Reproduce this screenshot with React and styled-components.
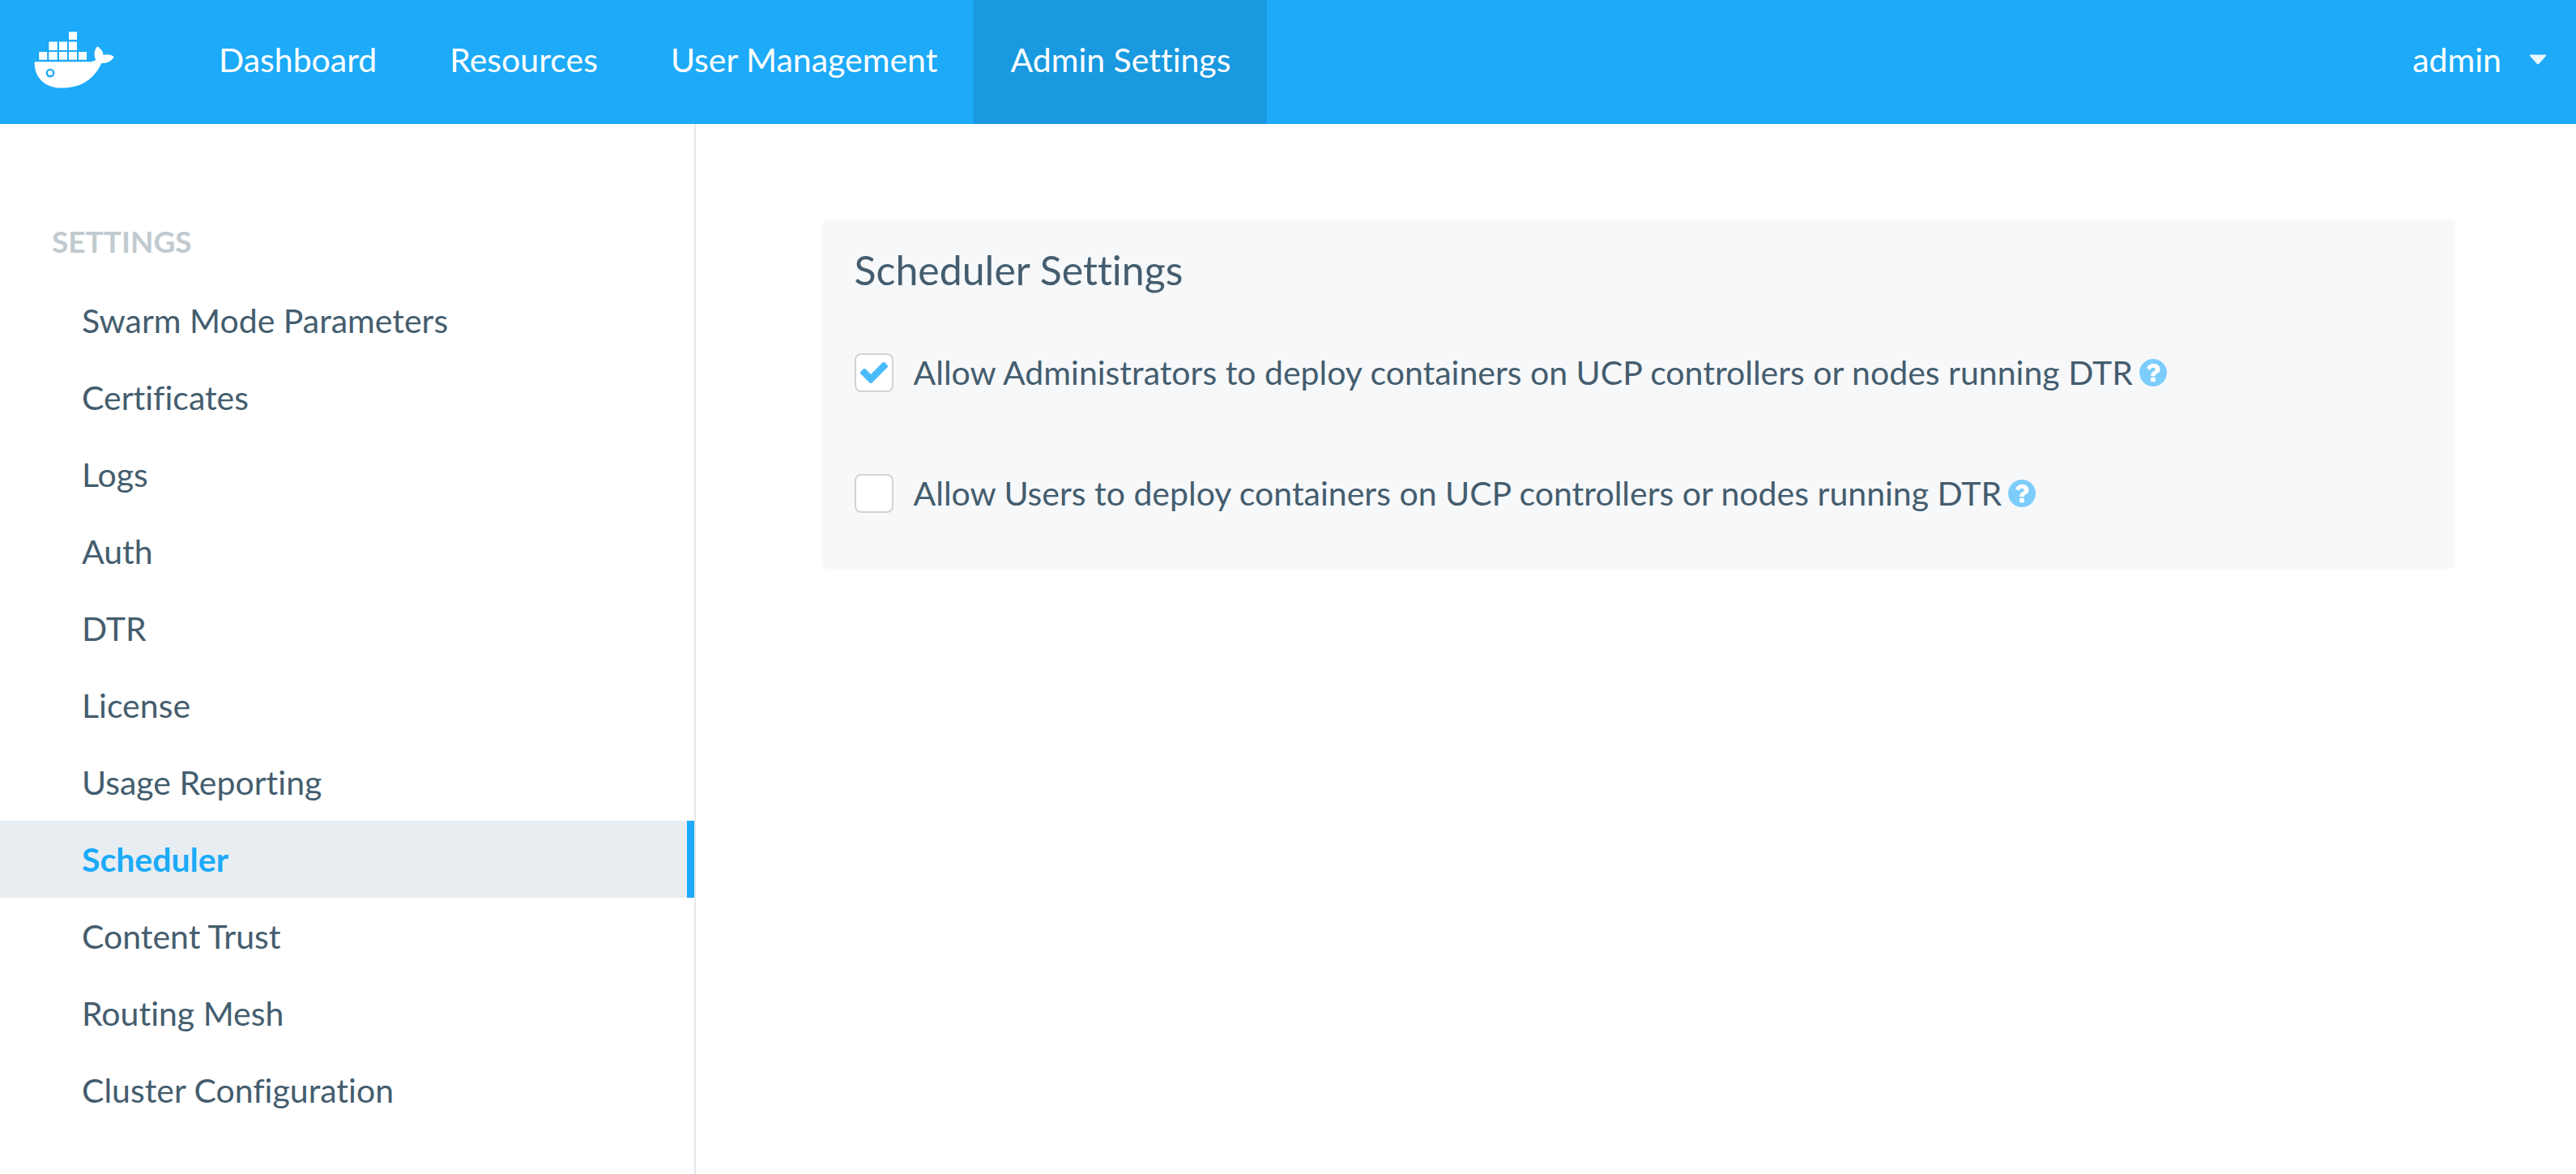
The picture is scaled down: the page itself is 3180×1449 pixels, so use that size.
import React from "react";
import styled, { createGlobalStyle } from "styled-components";

const GlobalStyle = createGlobalStyle`
  *, *::before, *::after { box-sizing: border-box; }
  body {
    margin: 0;
    background: #fff;
    color: #445d6e;
    font: 400 41px/50px Lato, "Open Sans", sans-serif;
    font-variant-ligatures: none;
  }
`;

const Page = styled.div`
  min-height: 100vh;
  display: flex;
  flex-direction: column;
`;

const Header = styled.header`
  display: flex;
  align-items: stretch;
  min-height: 153px;
  background: #1caaf9;
`;

const Brand = styled.a`
  display: flex;
  align-items: center;
  padding: 0 84px 5px 42px;
`;

const Nav = styled.nav`
  display: flex;
`;

const NavLink = styled.a`
  display: flex;
  align-items: center;
  padding: 0 45px 6px;
  color: #fff;
  text-decoration: none;
  background: ${({ $active }) => ($active ? "#1899e0" : "transparent")};
`;

const AccountButton = styled.button`
  display: flex;
  align-items: center;
  gap: 34px;
  margin-left: auto;
  padding: 0 36px 6px;
  border: 0;
  background: none;
  color: #fff;
  font: inherit;
  cursor: pointer;
`;

const Body = styled.div`
  flex: 1;
  display: flex;
`;

const Sidebar = styled.aside`
  flex: 0 0 27%;
  padding-top: 120px;
  border-right: 2px solid #e5e6e8;
`;

const SidebarTitle = styled.h2`
  margin: 0 0 25px;
  padding-left: 64px;
  color: #c0cacf;
  font-size: 37px;
  font-weight: 700;
  line-height: 50px;
`;

const Menu = styled.ul`
  margin: 0;
  padding: 0;
  list-style: none;
`;

const MenuLink = styled.a`
  display: block;
  padding-left: 101px;
  border-right: 9px solid ${({ $active }) => ($active ? "#1caaf9" : "transparent")};
  background: ${({ $active }) => ($active ? "#e8edf1" : "transparent")};
  color: ${({ $active }) => ($active ? "#1caaf9" : "inherit")};
  font-weight: ${({ $active }) => ($active ? 700 : 400)};
  line-height: 95px;
  text-decoration: none;
`;

const Main = styled.main`
  flex: 1;
  min-width: 0;
  padding: 118px 149px 118px 156px;
`;

const Card = styled.section`
  padding: 32px 40px 69px;
  border-radius: 6px;
  background: #f7f8fa;
`;

const CardTitle = styled.h1`
  margin: 0 0 73px;
  font-size: 50px;
  font-weight: 400;
  line-height: 60px;
`;

const Options = styled.div`
  display: flex;
  flex-direction: column;
  gap: 101px;
`;

const Option = styled.div`
  display: flex;
  align-items: center;
  min-height: 48px;
`;

const CheckCell = styled.span`
  display: grid;
  place-items: center;
  margin-right: 25px;

  > * { grid-area: 1 / 1; }
  > svg { pointer-events: none; visibility: hidden; }
  > input:checked + svg { visibility: visible; }
`;

const Checkbox = styled.input`
  appearance: none;
  width: 48px;
  height: 48px;
  margin: 0;
  border: 2px solid #d3d3d3;
  border-radius: 8px;
  background: #fff;
`;

const OptionLabel = styled.label`
  line-height: 48px;
`;

const HelpButton = styled.button`
  display: flex;
  margin-left: 8px;
  padding: 0;
  border: 0;
  background: none;
  color: #7ccdfb;
  cursor: pointer;
`;

function Whale() {
  return (
    <svg width="99" height="70" viewBox="42 39 99 70" fill="#fff" aria-hidden="true">
      <path d="M85 39.300h10v9.700h-10zM60.300 51.500h10.400V62H60.300zM73 51.500h10V62H73zM85 51.500h10V62H85zM48.200 64h10v9.700h-10zM60.300 64h10.400v9.700H60.300zM73 64h10v9.700H73zM85 64h10v9.700H85zM97 64h10v9.700H97z" />
      <path
        fillRule="evenodd"
        d="M43 76.300H110C113 76.300 116 75.300 118.300 73.900C115.500 68 116 61.500 120.200 57.200C124.500 60 127.500 63.500 127.500 68C132 66.700 137 67 140.700 70C138 75.500 132 78.500 125.300 78C117 96 102 108.600 76 108.600C54 108.600 41.700 94 42.700 76.300ZM62 84.700a5.400 5.400 0 1 0 0 10.800a5.400 5.400 0 1 0 0-10.800Z"
      />
      <circle cx="62" cy="90.100" r="3" />
    </svg>
  );
}

function Caret() {
  return (
    <svg width="22" height="13" viewBox="0 0 22 13" fill="#e8f6fe" aria-hidden="true">
      <path d="M1.500 0.500h19q1.200 0.300 0.500 1.500l-9 10q-1 0.800-2 0l-9-10q-0.700-1.200 0.500-1.500z" />
    </svg>
  );
}

function CheckMark() {
  return (
    <svg width="34" height="26" viewBox="121 334 1550 1188" fill="#49bafb" aria-hidden="true">
      <path d="M1671 566q0 40-28 68l-724 724-136 136q-28 28-68 28t-68-28l-136-136-362-362q-28-28-28-68t28-68l136-136q28-28 68-28t68 28l294 295 656-657q28-28 68-28t68 28l136 136q28 28 28 68z" />
    </svg>
  );
}

function QuestionCircle() {
  return (
    <svg width="34" height="34" viewBox="128 128 1536 1536" fill="currentColor" aria-hidden="true">
      <circle cx="896" cy="896" r="700" fill="#fff" />
      <path d="M1024 1376v-192q0-14-9-23t-23-9h-192q-14 0-23 9t-9 23v192q0 14 9 23t23 9h192q14 0 23-9t9-23zm256-672q0-88-55.500-163t-138.500-116-170-41q-243 0-371 213-15 24 8 42l132 100q7 6 19 6 16 0 25-12 53-68 86-92 34-24 86-24 48 0 85.500 26t37.500 59q0 38-20 61t-68 45q-63 28-115.500 86.500t-52.500 125.500v36q0 14 9 23t23 9h192q14 0 23-9t9-23q0-19 21.500-49.500t54.500-49.500q32-18 49-28.500t46-35 44.500-48 28-60.500 12.500-81zm384 192q0 209-103 385.500t-279.500 279.500-385.500 103-385.500-103-279.500-279.500-103-385.500 103-385.500 279.500-279.500 385.500-103 385.500 103 279.500 279.500 103 385.500z" />
    </svg>
  );
}

const navItems = ["Dashboard", "Resources", "User Management", "Admin Settings"];

const menuItems = [
  "Swarm Mode Parameters",
  "Certificates",
  "Logs",
  "Auth",
  "DTR",
  "License",
  "Usage Reporting",
  "Scheduler",
  "Content Trust",
  "Routing Mesh",
  "Cluster Configuration",
];

const options = [
  {
    id: "allow-admins",
    label: "Allow Administrators to deploy containers on UCP controllers or nodes running DTR",
    checked: true,
  },
  {
    id: "allow-users",
    label: "Allow Users to deploy containers on UCP controllers or nodes running DTR",
    checked: false,
  },
];

export default function App() {
  return (
    <Page>
      <GlobalStyle />
      <Header>
        <Brand href="#" aria-label="Docker">
          <Whale />
        </Brand>
        <Nav>
          {navItems.map((item) => (
            <NavLink key={item} href="#" $active={item === "Admin Settings"}>
              {item}
            </NavLink>
          ))}
        </Nav>
        <AccountButton type="button">
          admin
          <Caret />
        </AccountButton>
      </Header>
      <Body>
        <Sidebar>
          <SidebarTitle>SETTINGS</SidebarTitle>
          <Menu>
            {menuItems.map((item) => (
              <li key={item}>
                <MenuLink href="#" $active={item === "Scheduler"}>
                  {item}
                </MenuLink>
              </li>
            ))}
          </Menu>
        </Sidebar>
        <Main>
          <Card>
            <CardTitle>Scheduler Settings</CardTitle>
            <Options>
              {options.map(({ id, label, checked }) => (
                <Option key={id}>
                  <CheckCell>
                    <Checkbox type="checkbox" id={id} defaultChecked={checked} />
                    <CheckMark />
                  </CheckCell>
                  <OptionLabel htmlFor={id}>{label}</OptionLabel>
                  <HelpButton type="button" aria-label="Help">
                    <QuestionCircle />
                  </HelpButton>
                </Option>
              ))}
            </Options>
          </Card>
        </Main>
      </Body>
    </Page>
  );
}
